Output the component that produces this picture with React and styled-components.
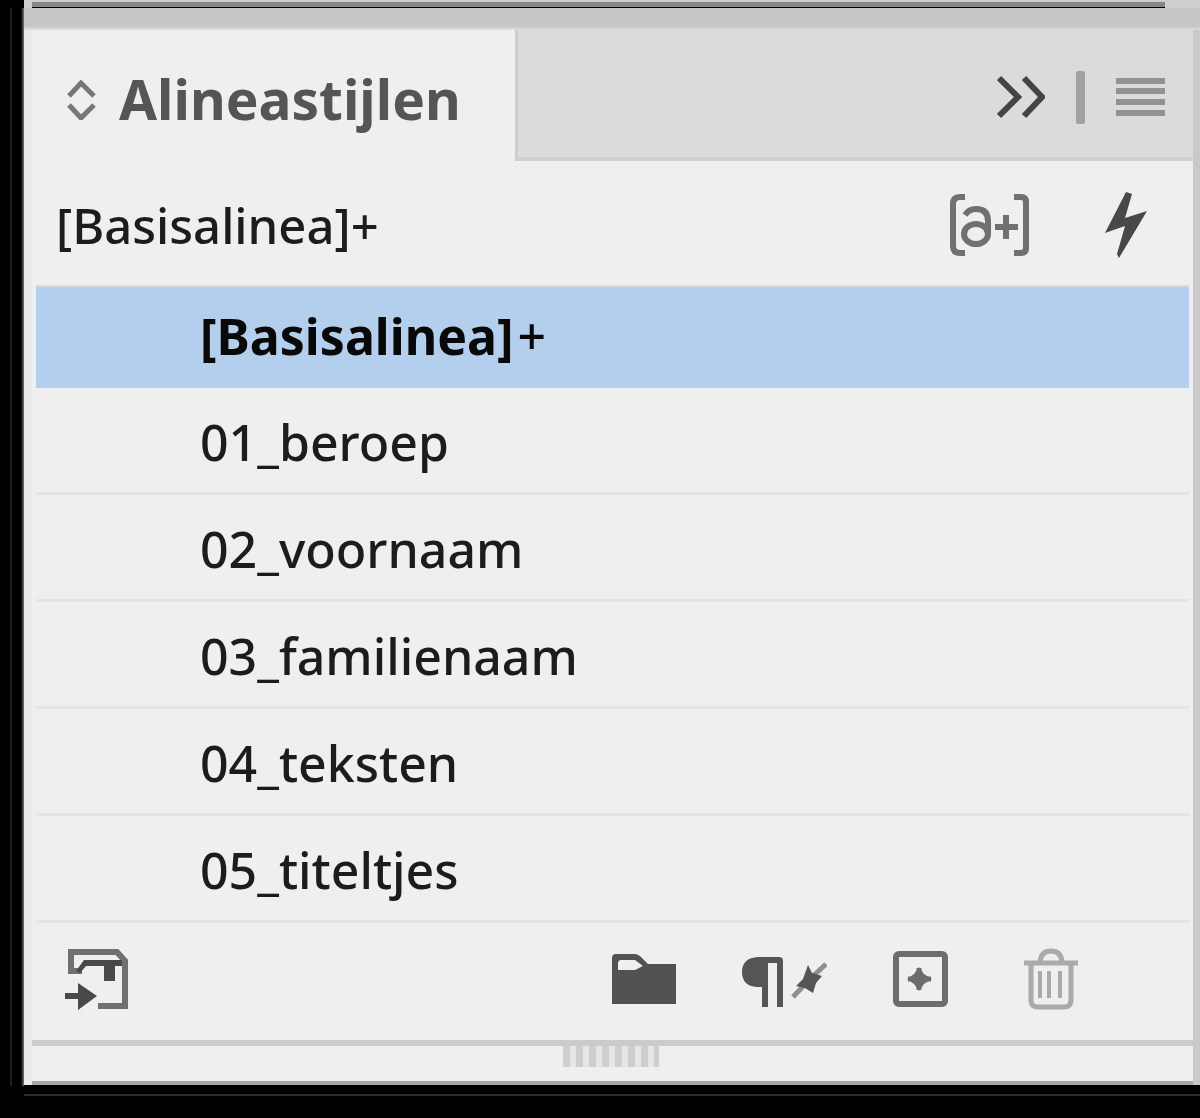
import React, { useState } from "react";
import styled, { createGlobalStyle } from "styled-components";

const GlobalStyle = createGlobalStyle`
  * { box-sizing: border-box; }
  body {
    margin: 0;
    background: #000;
    font-family: "Noto Sans", "Open Sans", sans-serif;
    color: #1c1c1c;
  }
`;

const Backdrop = styled.div`
  display: flex;
  min-height: 100vh;
  background: #000;
`;

const LeftEdge = styled.div`
  flex: 0 0 24px;
  margin: 8px 0 32px;
  background: linear-gradient(90deg, #000 10px, #1e1e1e 10px, #1e1e1e 12px, #000 12px, #000 21px, #777 24px);
`;

const Column = styled.div`
  flex: 1;
  min-width: 0;
`;

const TopEdge = styled.div`
  display: flex;
  height: 8px;
  background: #cfcfcf;
`;

const TopEdgeLine = styled.div`
  flex: 1;
  margin: 2px 35px 0 8px;
  background: #878787;
  border-bottom: 1px solid #000;
`;

const Panel = styled.main`
  border-left: 8px solid #ebebeb;
  border-right: 7px solid #c9c9c9;
  background: #efefef;
`;

const TitleStrip = styled.div`
  height: 22px;
  margin: 0 -7px 0 -8px;
  background: linear-gradient(#c6c6c6 18px, #dfdfdf 22px);
`;

const TabBar = styled.header`
  display: flex;
  height: 131px;
`;

const Tab = styled.h1`
  display: flex;
  align-items: center;
  gap: 23px;
  margin: 0;
  padding: 6px 54px 0 35px;
  font-size: 55px;
  line-height: 72px;
  font-weight: 700;
  color: #555;
`;

const TabActions = styled.div`
  flex: 1;
  display: flex;
  align-items: center;
  justify-content: flex-end;
  gap: 31px;
  padding: 7px 28px 0 0;
  background: #dbdbdb;
  border-left: 3px solid #cdcdcd;
  border-bottom: 4px solid #d0d0d0;
`;

const Divider = styled.span`
  width: 9px;
  height: 53px;
  background: #a2a2a2;
  border-radius: 2px;
`;

const IconButton = styled.button`
  display: flex;
  padding: 0;
  border: 0;
  background: none;
  cursor: pointer;
  svg { display: block; }
`;

const CurrentStyle = styled.section`
  display: flex;
  align-items: center;
  justify-content: space-between;
  height: 124px;
  padding: 4px 46px 0 24px;
  font-size: 49px;
  line-height: 68px;
  font-weight: 500;
`;

const HeaderActions = styled.div`
  display: flex;
  align-items: center;
  gap: 74px;
`;

const StyleList = styled.ul`
  margin: 0 4px;
  padding: 0;
  list-style: none;
  border-top: 2px solid #d9dadb;
`;

const StyleRow = styled.button`
  display: flex;
  align-items: center;
  width: 100%;
  height: ${(p) => (p.$base ? 101 : 107)}px;
  padding: ${(p) => (p.$base ? "0 0 4px 164px" : "4px 0 0 164px")};
  border: 0;
  border-bottom: ${(p) => (p.$base ? 0 : 3)}px solid #e4e4e4;
  background: ${(p) => (p.$selected ? "#b4cfed" : "#efefef")};
  font: inherit;
  font-size: 50px;
  line-height: 68px;
  font-weight: 500;
  color: ${(p) => (p.$selected ? "#080808" : "#1c1c1c")};
  text-align: left;
  cursor: pointer;
`;

const BaseName = styled.b`
  margin-right: 4px;
  font-weight: 700;
`;

const Footer = styled.footer`
  display: flex;
  align-items: center;
  justify-content: space-between;
  height: 117px;
  padding: 0 105px 6px 33px;
`;

const FooterActions = styled.div`
  display: flex;
  align-items: center;
  gap: 66px;
`;

const ResizeArea = styled.div`
  display: flex;
  justify-content: center;
  height: 45px;
  padding-right: 4px;
  border-top: 6px solid #cbcbcb;
  border-bottom: 4px solid #a8a8a8;
`;

const Grip = styled.div`
  width: 96px;
  height: 21px;
  background: repeating-linear-gradient(90deg, #cecece 0 7px, #e6e6e6 7px 13px);
`;

const BottomEdge = styled.div`
  height: 11px;
  border-bottom: 2px solid #2c2c2c;
`;

const SortIcon = () => (
  <svg width="29" height="42" viewBox="67 78 29 42" fill="none" stroke="#777" strokeWidth="5" aria-hidden="true">
    <path d="M69 96 81 83 94 96M69 105 81 118 94 105" />
  </svg>
);

const CollapseIcon = () => (
  <svg width="48" height="44" viewBox="996 76 48 44" fill="none" stroke="#444" strokeWidth="6" aria-hidden="true">
    <path d="M998 79 1017 98 998 117M1023 79 1041 98 1023 117" />
  </svg>
);

const MenuIcon = () => (
  <svg width="49" height="40" viewBox="1116 76 49 40" stroke="#929292" strokeWidth="6" aria-hidden="true">
    <path d="M1116 80h49M1116 90h49M1116 101h49M1116 112h49" />
  </svg>
);

const OverrideIcon = () => (
  <svg width="82" height="64" viewBox="949 193 82 64" fill="none" stroke="#707070" strokeWidth="6" aria-hidden="true">
    <path d="M966 197h-5q-7 0-7 7v42q0 7 7 7h5M1015 197h7q5 0 5 5v46q0 5-5 5h-7" />
    <path d="M966 215Q970 209 977 209Q989 209 989 221V234" />
    <ellipse cx="977" cy="234" rx="12" ry="10" />
    <path d="M996 227h23M1007 215v24" />
  </svg>
);

const BoltIcon = () => (
  <svg width="43" height="68" viewBox="1104 188 43 68" fill="#484848" aria-hidden="true">
    <path d="M1126 189 1132 191 1125 215 1147 208 1119 255 1117 251 1125 223 1105 230Z" />
  </svg>
);

const LoadIcon = () => (
  <svg width="65" height="62" viewBox="65 947 65 62" aria-hidden="true">
    <path d="M82 970H71V951H117L125 960V1005H98" fill="none" stroke="#707070" strokeWidth="6" />
    <path d="M76 970 84 959H122V965H115V980H104V965H86L80 972Z" fill="#494949" />
    <path d="M65 992H78V982L97 995 78 1009V998H65Z" fill="#494949" />
  </svg>
);

const FolderIcon = () => (
  <svg width="64" height="52" viewBox="612 952 64 52" aria-hidden="true">
    <path d="M612 1003V957Q612 953 616 953H635Q638 953 641 956L648 963H676V1003ZM618 969H635L643 965 635 959H620L618 961Z" fill="#525252" fillRule="evenodd" />
  </svg>
);

const ClearIcon = () => (
  <svg width="85" height="58" viewBox="742 951 85 58" fill="#555" aria-hidden="true">
    <path d="M758 958H779Q783 958 783 962V1008H777V964H768V1008H762V988H757Q742 987 742 973T758 958Z" />
    <path d="M793 998 809 981 826 965" fill="none" stroke="#909090" strokeWidth="5" />
    <path d="M808 966 812 974 822 977 816 984 813 994 805 989 796 987 803 980Z" />
  </svg>
);

const NewIcon = () => (
  <svg width="55" height="56" viewBox="893 953 55 56" fill="none" stroke="#6d6d6d" strokeWidth="6" aria-hidden="true">
    <rect x="896" y="956" width="49" height="50" rx="3" />
    <path d="M919 969 924 976 932 981 924 986 919 993 914 986 907 981 914 976Z" fill="#6d6d6d" stroke="none" />
    <path d="M908 981h23M919 970v22" strokeWidth="5" />
  </svg>
);

const TrashIcon = () => (
  <svg width="74" height="62" viewBox="1014 947 74 62" fill="none" stroke="#aaa" strokeWidth="5" aria-hidden="true">
    <path d="M1024 962h54M1040 961q1-11 11-11t11 11M1031 963v36q0 7 7 7h26q7 0 7-7v-36" />
    <path d="M1040 970v27M1049 970v27M1060 970v27" strokeWidth="4" />
  </svg>
);

const STYLES = ["01_beroep", "02_voornaam", "03_familienaam", "04_teksten", "05_titeltjes"];

export default function App() {
  const [selected, setSelected] = useState("base");

  return (
    <Backdrop>
      <GlobalStyle />
      <LeftEdge />
      <Column>
        <TopEdge>
          <TopEdgeLine />
        </TopEdge>
        <Panel>
          <TitleStrip />
          <TabBar>
            <Tab>
              <SortIcon />
              Alineastijlen
            </Tab>
            <TabActions>
              <IconButton type="button" aria-label="Samenvouwen"><CollapseIcon /></IconButton>
              <Divider />
              <IconButton type="button" aria-label="Menu"><MenuIcon /></IconButton>
            </TabActions>
          </TabBar>
          <CurrentStyle>
            <span>[Basisalinea]+</span>
            <HeaderActions>
              <IconButton type="button" aria-label="Overschrijvingen markeren"><OverrideIcon /></IconButton>
              <IconButton type="button" aria-label="Snel toepassen"><BoltIcon /></IconButton>
            </HeaderActions>
          </CurrentStyle>
          <StyleList>
            <li>
              <StyleRow
                type="button"
                $base
                $selected={selected === "base"}
                aria-pressed={selected === "base"}
                onClick={() => setSelected("base")}
              >
                <BaseName>[Basisalinea]</BaseName>+
              </StyleRow>
            </li>
            {STYLES.map((name) => (
              <li key={name}>
                <StyleRow
                  type="button"
                  $selected={selected === name}
                  aria-pressed={selected === name}
                  onClick={() => setSelected(name)}
                >
                  {name}
                </StyleRow>
              </li>
            ))}
          </StyleList>
          <Footer>
            <IconButton type="button" aria-label="Stijlen laden"><LoadIcon /></IconButton>
            <FooterActions>
              <IconButton type="button" aria-label="Nieuwe stijlgroep"><FolderIcon /></IconButton>
              <IconButton type="button" aria-label="Overschrijvingen wissen"><ClearIcon /></IconButton>
              <IconButton type="button" aria-label="Nieuwe stijl"><NewIcon /></IconButton>
              <IconButton type="button" aria-label="Verwijderen"><TrashIcon /></IconButton>
            </FooterActions>
          </Footer>
          <ResizeArea>
            <Grip />
          </ResizeArea>
        </Panel>
        <BottomEdge />
      </Column>
    </Backdrop>
  );
}
